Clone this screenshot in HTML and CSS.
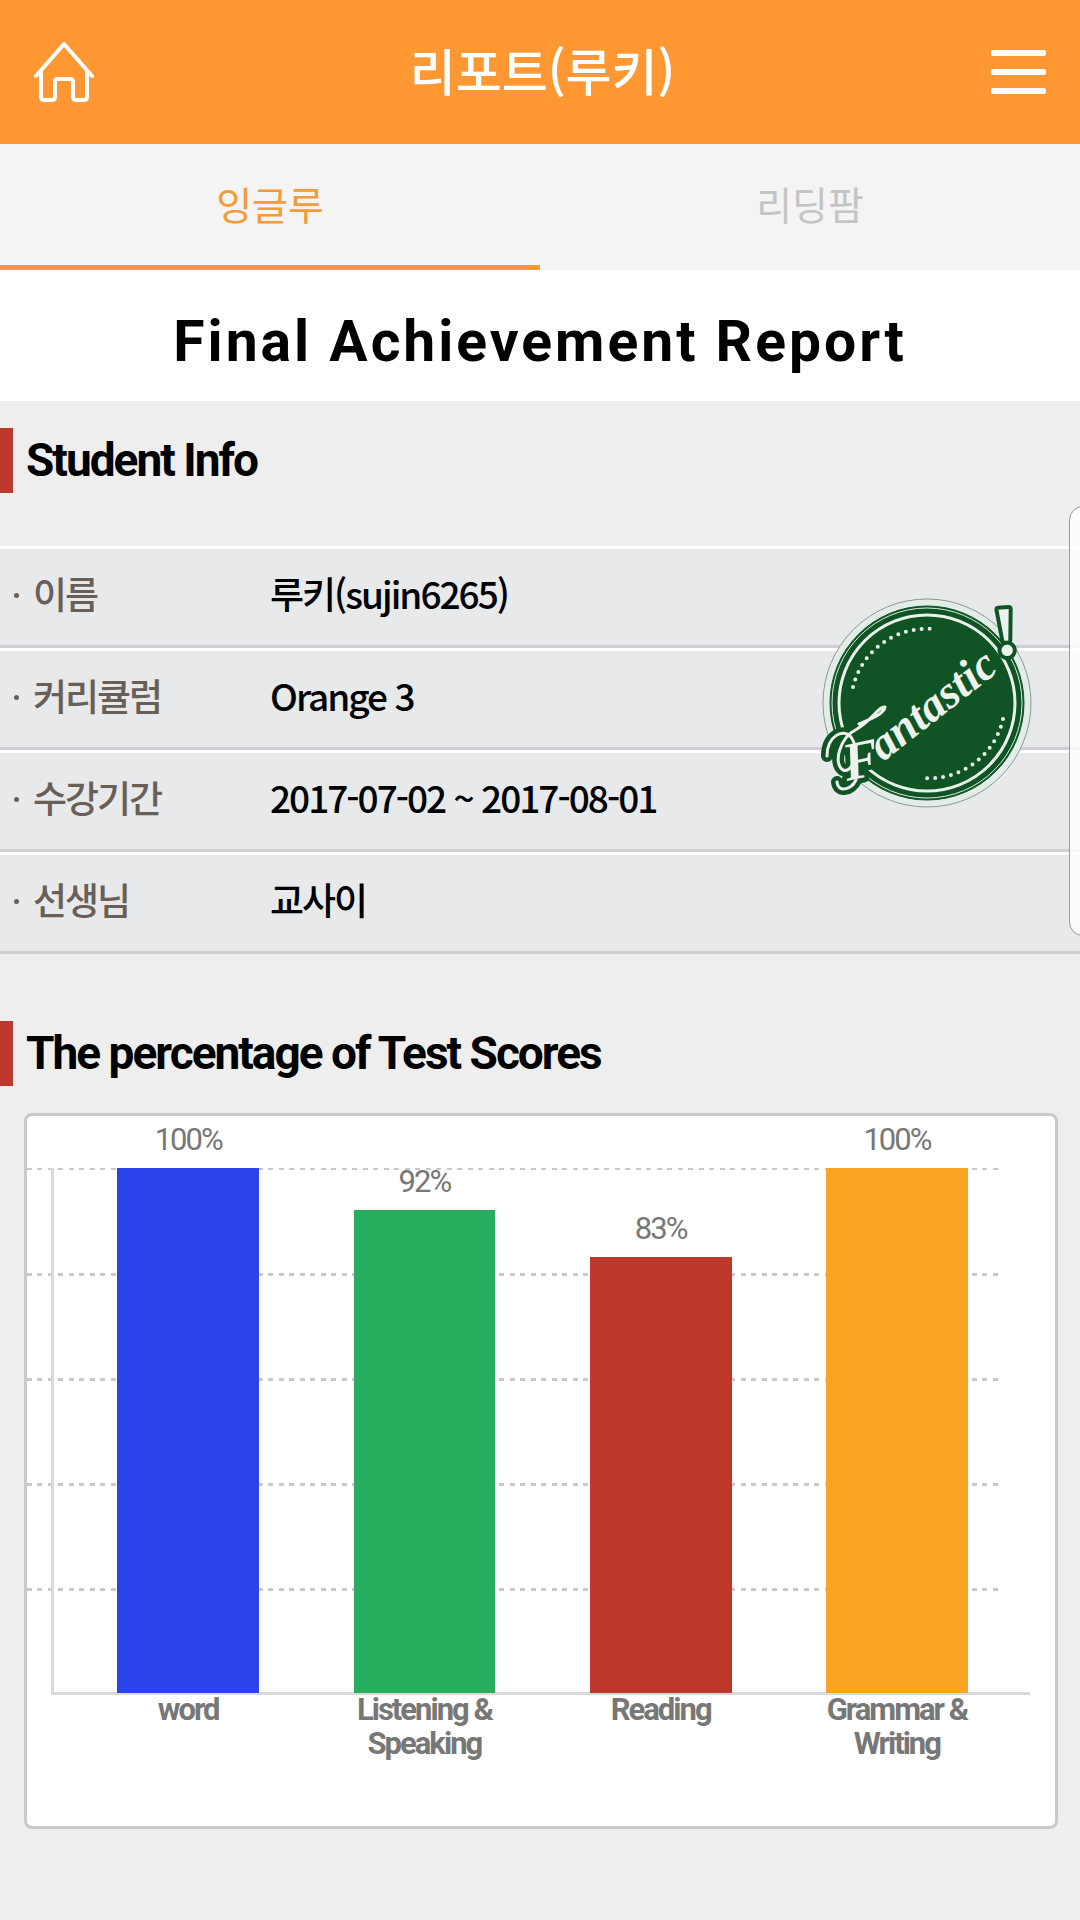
FILE: index.html
```html
<!DOCTYPE html>
<html lang="ko">
<head>
<meta charset="utf-8">
<meta name="viewport" content="width=device-width, initial-scale=1">
<title>리포트(루키)</title>
<link rel="stylesheet" href="styles.css">
</head>
<body>
<header class="topbar">
  <a class="icon-button" href="#" aria-label="홈">
    <svg width="60" height="60" viewBox="0 0 60 60" fill="none" stroke="currentColor" stroke-width="4" stroke-linecap="round" stroke-linejoin="round">
      <path d="M2 34L30 2L58 34"/>
      <path d="M7 30V55Q7 58 10 58H18Q21 58 21 55V40Q21 37 24 37H36Q39 37 39 40V55Q39 58 42 58H50Q53 58 53 55V30"/>
    </svg>
  </a>
  <h1 class="topbar-title">리포트(루키)</h1>
  <button class="icon-button" type="button" aria-label="메뉴">
    <svg width="55" height="44" viewBox="0 0 55 44" fill="currentColor">
      <rect x="0" y="0" width="55" height="6" rx="2"/>
      <rect x="0" y="19" width="55" height="6" rx="2"/>
      <rect x="0" y="38" width="55" height="6" rx="2"/>
    </svg>
  </button>
</header>
<nav class="tabs">
  <a class="tab tab-active" href="#" aria-current="page">잉글루</a>
  <a class="tab" href="#">리딩팜</a>
</nav>
<main>
  <h2 class="report-title">Final Achievement Report</h2>

  <section class="student">
    <h3 class="section-title">Student Info</h3>
    <table class="info">
      <tbody>
        <tr><th scope="row">이름</th><td>루키(sujin6265)</td></tr>
        <tr><th scope="row">커리큘럼</th><td>Orange 3</td></tr>
        <tr><th scope="row">수강기간</th><td>2017-07-02 ~ 2017-08-01</td></tr>
        <tr><th scope="row">선생님</th><td>교사이</td></tr>
      </tbody>
    </table>
    <svg class="badge" width="225" height="225" viewBox="0 0 225 225" role="img" aria-label="Fantastic!">
      <circle cx="112" cy="113" r="104" fill="#e3ede8" stroke="#8b9a93"/>
      <circle cx="112" cy="113" r="97" fill="#105426" stroke="#105426"/>
      <circle cx="112" cy="113" r="95" fill="none" stroke="#dcebe2"/>
      <circle cx="112" cy="113" r="88" fill="none" stroke="#e9f2ea" stroke-width="3"/>
      <path d="M38 97A76 76 0 0 1 118 39M188 129A76 76 0 0 1 108 188" fill="none" stroke="#e9f2ea" stroke-width="4" stroke-linecap="round" stroke-dasharray="0 8"/>
      <g class="lettering">
        <text class="bang" x="181" y="66" font-size="70" transform="rotate(-5 181 66)">!</text>
        <path class="swash-edge" d="M12 166C12 146 28 138 36 147C45 160 38 184 28 180C18 174 24 148 42 139C56 131 64 116 70 117C69 124 56 129 44 134M22 192C23 203 36 200 41 190"/>
        <text class="script-f" x="32" y="191" font-size="54" transform="rotate(-12 32 191)">F</text>
        <path class="swash-line" d="M12 166C12 146 28 138 36 147C45 160 38 184 28 180C18 174 24 148 42 139C56 131 64 116 70 117C69 124 56 129 44 134M22 192C23 203 36 200 41 190"/>
        <text class="script" x="68" y="172" font-size="46" transform="rotate(-38 68 172)">antastic</text>
      </g>
    </svg>
    <div class="edge-panel"></div>
  </section>

  <section class="scores">
    <h3 class="section-title">The percentage of Test Scores</h3>
    <div class="chart">
      <div class="plot">
        <div class="grid">
          <i></i><i></i><i></i><i></i><i></i>
        </div>
        <div class="axes"></div>
        <div class="bars">
          <div class="bar-col"><span class="value">100%</span><div class="bar blue" style="height:100%"></div></div>
          <div class="bar-col"><span class="value">92%</span><div class="bar green" style="height:92%"></div></div>
          <div class="bar-col"><span class="value">83%</span><div class="bar red" style="height:83%"></div></div>
          <div class="bar-col"><span class="value">100%</span><div class="bar orange" style="height:100%"></div></div>
        </div>
      </div>
      <div class="labels">
        <span>word</span>
        <span>Listening &amp;<br>Speaking</span>
        <span>Reading</span>
        <span>Grammar &amp;<br>Writing</span>
      </div>
    </div>
  </section>
</main>
</body>
</html>
```
FILE: styles.css
```css
* { box-sizing: border-box; }
body {
  margin: 0;
  background: #eee;
  color: #000;
  font-family: Roboto, "Noto Sans CJK KR", sans-serif;
}
h1, h2, h3 { margin: 0; }
svg { display: block; }

/* Header */
.topbar {
  display: flex;
  align-items: center;
  justify-content: space-between;
  height: 144px;
  padding: 0 34px;
  background: #ff9833;
  color: #fff;
}
.icon-button {
  padding: 0;
  border: 0;
  background: none;
  color: inherit;
}
.topbar-title {
  padding-bottom: 6px;
  font: 500 50px/72px "Noto Sans CJK KR", sans-serif;
}

.tabs {
  display: flex;
  height: 126px;
  background: #f4f4f4;
}
.tab {
  flex: 1;
  border-bottom: 5px solid transparent;
  color: #c4c4c4;
  font: 400 39px/118px "Noto Sans CJK KR", sans-serif;
  text-align: center;
  text-decoration: none;
}
.tab-active {
  border-color: #ff9833;
  color: #f79a3a;
}

.report-title {
  padding-top: 12px;
  background: #fff;
  font-size: 57px;
  font-weight: 700;
  line-height: 119px;
  letter-spacing: 3px;
  text-align: center;
}

/* Sections */
.section-title {
  padding-left: 13px;
  border-left: 13px solid #be382b;
  font-size: 46px;
  font-weight: 700;
  line-height: 65px;
  letter-spacing: -2px;
}
.student {
  position: relative;
  overflow: hidden;
  padding-top: 27px;
}
.info {
  width: 100%;
  margin-top: 53px;
  border-spacing: 0;
  font: 500 37px/48px "Noto Sans CJK KR", sans-serif;
  letter-spacing: -2px;
  text-align: left;
}
.info th,
.info td {
  height: 102px;
  padding: 0 0 8px;
  border-top: 3px solid #fff;
  border-bottom: 3px solid #cecfd5;
  background: #e8e9eb;
}
.info th {
  width: 25%;
  color: #685f58;
  font-weight: 500;
}
.info th::before {
  content: "";
  display: inline-block;
  width: 5px;
  height: 5px;
  margin: 0 14px 11px;
  border-radius: 50%;
  background: #685f58;
}
.badge {
  position: absolute;
  top: 189px;
  right: 40px;
  overflow: visible;
}
.lettering text {
  fill: #eef2ec;
  stroke: #105426;
  paint-order: stroke;
  stroke-linejoin: round;
}
.lettering .script,
.lettering .script-f {
  font-family: "Liberation Serif", serif;
  font-style: italic;
}
.lettering .script { font-weight: 700; stroke-width: 3px; }
.lettering .script-f { font-weight: 700; stroke-width: 10px; }
.lettering .bang {
  font-family: "Liberation Serif", serif;
  font-weight: 700;
  stroke-width: 8px;
}
.swash-edge,
.swash-line {
  fill: none;
  stroke-linecap: round;
  stroke-linejoin: round;
}
.swash-edge { stroke: #105426; stroke-width: 12px; }
.swash-line { stroke: #eef2ec; stroke-width: 3px; }
.edge-panel {
  position: absolute;
  top: 105px;
  right: -29px;
  width: 40px;
  height: 430px;
  border: 1px solid #999;
  border-radius: 14px;
  background: rgba(255, 255, 255, 0.8);
}

/* Chart */
.scores { padding: 67px 0 91px; }
.chart {
  margin: 27px 22px 0 24px;
  padding: 52px 0 65px;
  border: 3px solid #c9c9c9;
  border-radius: 8px;
  background: #fff;
}
.plot {
  position: relative;
  height: 525px;
}
.grid {
  position: absolute;
  inset: 0 57px 0 0;
  display: flex;
  flex-direction: column;
}
.grid i {
  flex: 1;
  background: repeating-linear-gradient(90deg, #c9c9c9 0 5px, transparent 5px 10px, #c9c9c9 10px 15px, transparent 15px 21px) top / 100% 3px no-repeat;
}
.grid i:first-child { background-size: 100% 2px; }
.axes {
  position: absolute;
  inset: 0 25px -2px 24px;
  border-left: 3px solid #dadada;
  border-bottom: 3px solid #dadada;
}
.bars, .labels {
  display: grid;
  grid-template-columns: repeat(4, 1fr);
  padding: 0 40px 0 43px;
}
.bars {
  position: relative;
  height: 100%;
}
.bar-col {
  display: flex;
  flex-direction: column;
  align-items: center;
  justify-content: flex-end;
  height: 525px;
}
.bar {
  flex: none;
  width: 60%;
}
.value {
  flex: none;
  margin-bottom: 10px;
  color: #777;
  font-size: 31px;
  line-height: 36px;
  letter-spacing: -2px;
}
.blue { background: #2b43e8; }
.green { background: #28ad5f; }
.red { background: #be382b; }
.orange { background: #faa324; }
.labels {
  min-height: 68px;
  color: #777;
  font-size: 31px;
  font-weight: 700;
  line-height: 34px;
  letter-spacing: -2px;
  text-align: center;
}
```
